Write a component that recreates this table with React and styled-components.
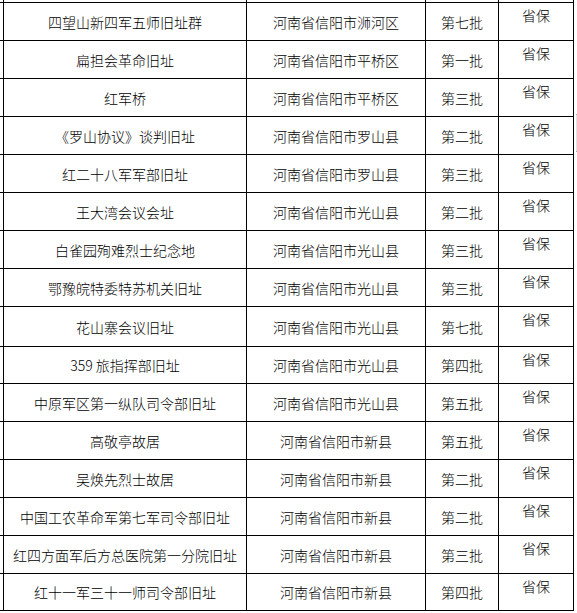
import React from 'react';
import styled, { createGlobalStyle } from 'styled-components';

const GlobalStyle = createGlobalStyle`
  html, body {
    margin: 0;
    padding: 0;
    background: #fff;
  }
  body {
    font-family: "Noto Sans CJK SC", "Liberation Sans", sans-serif;
    font-size: 14px;
    font-weight: 300;
    color: #000;
  }
`;

const Page = styled.div`
  position: relative;
  width: 577px;
  height: 613px;
  overflow: hidden;
  background: #fff;
`;

const Table = styled.div`
  display: grid;
  grid-template-columns: 3px 242px 178px 72px 74px;
  grid-template-rows: ${(props) => props.rows};
  gap: 1px;
  width: 573px;
  background: #000;
  border-right: 1px solid #000;
  border-bottom: 1px solid #000;
`;

const Cell = styled.div`
  background: #fff;
  display: flex;
  justify-content: center;
  align-items: ${(props) => (props.top ? 'flex-start' : 'center')};
  padding-top: ${(props) => (props.top ? '2px' : '0')};
  line-height: 20px;
  white-space: nowrap;
  overflow: hidden;
`;

const ScrollMark = styled.div`
  position: absolute;
  left: 576px;
  top: 114px;
  width: 1px;
  height: 36px;
  background: #e4e4e4;
  border-top: 1px solid #aaa;
  border-bottom: 1px solid #aaa;
`;

const sites = [
  ['四望山新四军五师旧址群', '河南省信阳市浉河区', '第七批'],
  ['扁担会革命旧址', '河南省信阳市平桥区', '第一批'],
  ['红军桥', '河南省信阳市平桥区', '第三批'],
  ['《罗山协议》谈判旧址', '河南省信阳市罗山县', '第二批'],
  ['红二十八军军部旧址', '河南省信阳市罗山县', '第三批'],
  ['王大湾会议会址', '河南省信阳市光山县', '第二批'],
  ['白雀园殉难烈士纪念地', '河南省信阳市光山县', '第三批'],
  ['鄂豫皖特委特苏机关旧址', '河南省信阳市光山县', '第三批'],
  ['花山寨会议旧址', '河南省信阳市光山县', '第七批'],
  ['359 旅指挥部旧址', '河南省信阳市光山县', '第四批'],
  ['中原军区第一纵队司令部旧址', '河南省信阳市光山县', '第五批'],
  ['高敬亭故居', '河南省信阳市新县', '第五批'],
  ['吴焕先烈士故居', '河南省信阳市新县', '第二批'],
  ['中国工农革命军第七军司令部旧址', '河南省信阳市新县', '第二批'],
  ['红四方面军后方总医院第一分院旧址', '河南省信阳市新县', '第三批'],
  ['红十一军三十一师司令部旧址', '河南省信阳市新县', '第四批'],
];

// row heights measured off the screenshot (content only, 1px line between)
const heights = [37, 37, 37, 37, 37, 37, 37, 37, 39, 36, 37, 37, 37, 37, 37, 36];
const rowTemplate = ['2px', ...heights.map((h) => `${h}px`)].join(' ');

const App = () => (
  <Page>
    <GlobalStyle />
    <Table rows={rowTemplate}>
      {/* cut-off row above */}
      <Cell />
      <Cell />
      <Cell />
      <Cell />
      <Cell />
      {sites.map(([name, place, batch]) => (
        <React.Fragment key={name}>
          <Cell />
          <Cell>{name}</Cell>
          <Cell>{place}</Cell>
          <Cell>{batch}</Cell>
          <Cell top>省保</Cell>
        </React.Fragment>
      ))}
    </Table>
    <ScrollMark />
  </Page>
);

export default App;
